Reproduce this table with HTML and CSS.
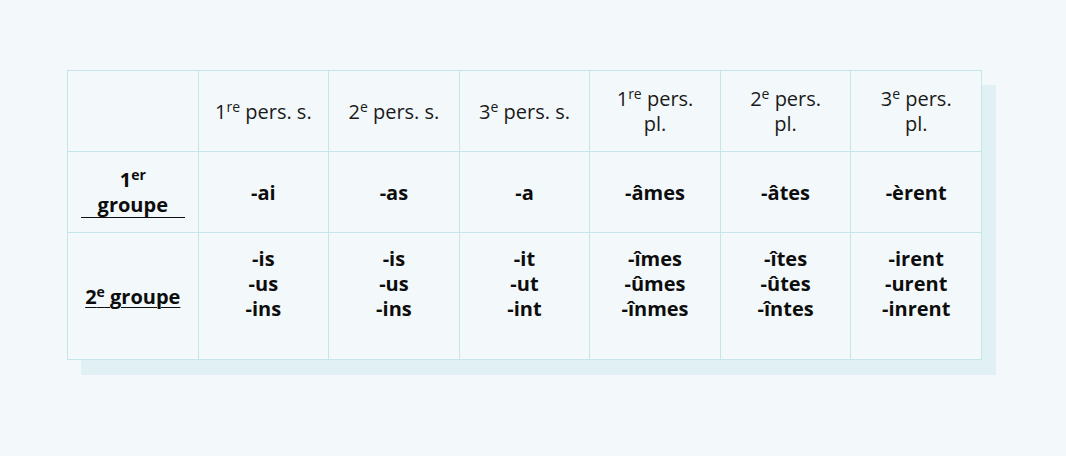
FILE: index.html
```html
<!DOCTYPE html>
<html lang="fr">
<head>
<meta charset="utf-8">
<link rel="stylesheet" href="styles.css">
</head>
<body>
<div class="wrap">
<div class="card">
<table class="conj">
<thead>
<tr>
<th class="corner"></th>
<th>1<sup>re</sup> pers. s.</th>
<th>2<sup>e</sup> pers. s.</th>
<th>3<sup>e</sup> pers. s.</th>
<th>1<sup>re</sup> pers.<br>pl.</th>
<th>2<sup>e</sup> pers.<br>pl.</th>
<th>3<sup>e</sup> pers.<br>pl.</th>
</tr>
</thead>
<tbody>
<tr class="r1">
<td class="grp">1<sup>er</sup><br><span class="ul1">groupe</span></td>
<td>-ai</td>
<td>-as</td>
<td>-a</td>
<td>-âmes</td>
<td>-âtes</td>
<td>-èrent</td>
</tr>
<tr class="r2">
<td class="grp"><span class="ul2">2<sup>e</sup> groupe</span></td>
<td class="multi">-is<br>-us<br>-ins</td>
<td class="multi">-is<br>-us<br>-ins</td>
<td class="multi">-it<br>-ut<br>-int</td>
<td class="multi">-îmes<br>-ûmes<br>-înmes</td>
<td class="multi">-îtes<br>-ûtes<br>-întes</td>
<td class="multi">-irent<br>-urent<br>-inrent</td>
</tr>
</tbody>
</table>
</div>
</div>
</body>
</html>
```
FILE: styles.css
```css
html, body {
  margin: 0;
  padding: 0;
  background: #f3f9fb;
}
body {
  font-family: "Open Sans", "Lato", sans-serif;
  color: #111;
  min-height: 456px;
}
.wrap {
  padding: 70px 0 81px 67px;
}
.card {
  width: 915px;
  background: #f3f9fb;
  box-shadow: 14px 15px 0 #e1f0f4;
}
.conj {
  border-collapse: collapse;
  width: 915px;
  table-layout: fixed;
}
.conj th, .conj td {
  border: 1px solid #c6e5ea;
  text-align: center;
  vertical-align: middle;
  padding: 0;
  font-size: 20px;
  line-height: 25px;
}
.conj th {
  font-weight: 400;
  color: #1a1a1a;
  height: 80px;
}
.conj td {
  font-weight: 700;
  color: #0d0d0d;
}
.conj tr.r1 td { height: 80px; }
.conj tr.r2 td { height: 101px; }
.conj td.multi { padding-bottom: 25px; }
.conj tr.r2 td.grp { padding: 13px 0 12px; }
sup {
  font-size: 14px;
  line-height: 0;
  vertical-align: 7px;
}
.ul1 {
  display: inline-block;
  padding: 0 17px;
  border-bottom: 1px solid #111;
  line-height: 24px;
}
.ul2 {
  text-decoration: underline;
  text-underline-offset: 3px;
  text-decoration-thickness: 1px;
}
```
